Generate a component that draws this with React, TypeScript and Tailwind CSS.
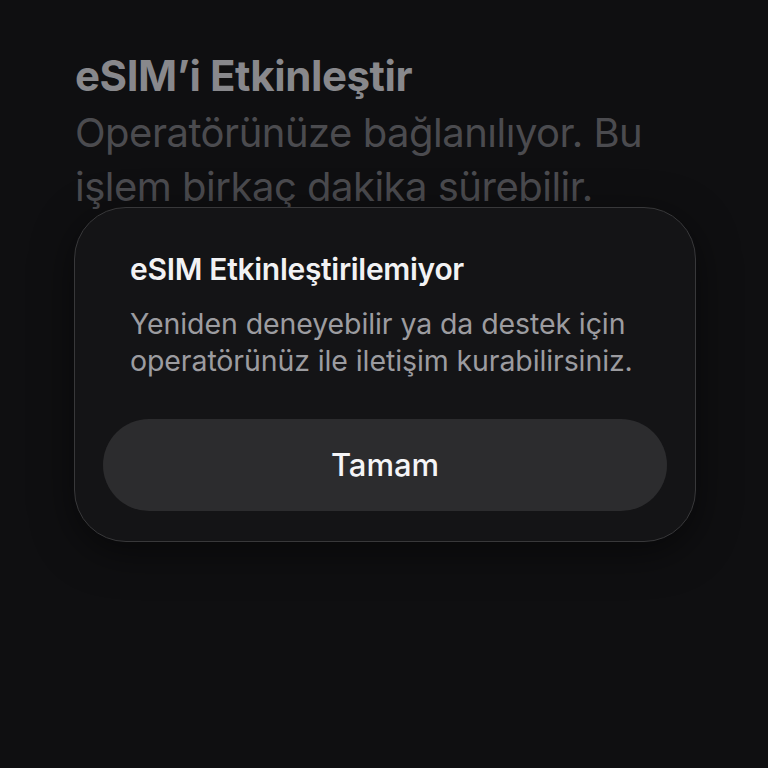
import { useState } from 'react';

const FONT = { fontFamily: 'Inter, "Noto Sans", "Liberation Sans", sans-serif' };

function ActivationErrorSheet({ onClose }: { onClose: () => void }) {
  return (
    <div className="absolute left-[74px] top-[207px] w-[622px] rounded-[52px] border border-[#38383a] bg-[#141416] px-[28px] pb-[30px] pt-[43px] shadow-[0_10px_40px_rgba(0,0,0,0.5)]">
      <div className="pl-[27px]">
        <h2 className="text-[30px] font-semibold leading-[36px] tracking-[-0.3px] text-[#f2f2f4]">
          eSIM Etkinleştirilemiyor
        </h2>
        <p className="mt-[18px] text-[28.5px] leading-[37px] tracking-[-0.1px] text-[#9c9ca0]">
          Yeniden deneyebilir ya da destek için operatörünüz ile iletişim kurabilirsiniz.
        </p>
      </div>
      <button
        type="button"
        onClick={onClose}
        className="mt-[40px] flex h-[92px] w-full items-center justify-center rounded-full bg-[#2c2c2e] text-[31px] font-medium text-[#f5f5f7]"
      >
        Tamam
      </button>
    </div>
  );
}

export default function App() {
  const [open, setOpen] = useState(true);

  return (
    <div className="relative h-[768px] w-[768px] overflow-hidden bg-[#0f0f11]" style={FONT}>
      <div className="px-[75px] pt-[52px]">
        <h1 className="text-[42px] font-bold leading-[48px] tracking-[-0.4px] text-[#88888c]">
          eSIM’i Etkinleştir
        </h1>
        <p className="mt-[6px] text-[40px] leading-[54px] tracking-[-0.5px] text-[#4b4b4f]">
          Operatörünüze bağlanılıyor. Bu işlem birkaç dakika sürebilir.
        </p>
      </div>
      {open && <ActivationErrorSheet onClose={() => setOpen(false)} />}
    </div>
  );
}
